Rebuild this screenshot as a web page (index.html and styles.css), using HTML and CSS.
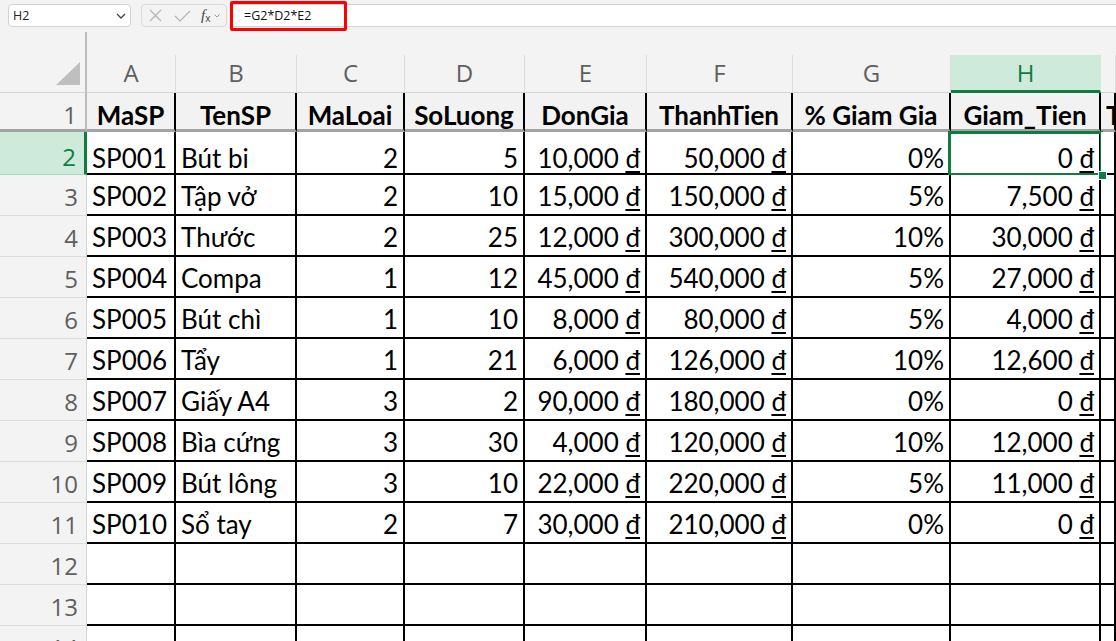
FILE: index.html
```html
<!DOCTYPE html>
<html lang="vi">
<head>
<meta charset="utf-8">
<title>Sheet</title>
<link rel="stylesheet" href="styles.css">
</head>
<body>
<div class="fbar">
  <div class="namebox">
    <span>H2</span>
    <svg class="chev" width="10" height="6" viewBox="0 0 10 6"><path d="M1 1 L5 5 L9 1" fill="none" stroke="#444" stroke-width="1.3"/></svg>
  </div>
  <div class="fnbox">
    <svg width="13" height="13" viewBox="0 0 13 13"><path d="M1 1 L12 12 M12 1 L1 12" stroke="#b3b3b3" stroke-width="1.2" fill="none"/></svg>
    <svg width="17" height="12" viewBox="0 0 17 12"><path d="M1 6 L6 11 L16 1" stroke="#b3b3b3" stroke-width="1.2" fill="none"/></svg>
    <span class="fx"><i>f</i><sub>x</sub></span>
    <svg width="6" height="4" viewBox="0 0 6 4"><path d="M0.5 0.5 L3 3 L5.5 0.5" stroke="#9a9a9a" stroke-width="1" fill="none"/></svg>
  </div>
  <div class="finput">
    <span>=G2*D2*E2</span>
    <div class="mark"></div>
  </div>
</div>

<div class="sheet">
  <div class="corner"><div class="tri"></div></div>
  <div class="ch">A</div><div class="ch">B</div><div class="ch">C</div><div class="ch">D</div><div class="ch">E</div><div class="ch">F</div><div class="ch">G</div><div class="ch sel">H</div><div class="ch"></div>

  <div class="rh r1">1</div>
  <div class="c hd">MaSP</div><div class="c hd">TenSP</div><div class="c hd">MaLoai</div><div class="c hd">SoLuong</div><div class="c hd">DonGia</div><div class="c hd">ThanhTien</div><div class="c hd">% Giam Gia</div><div class="c hd">Giam_Tien</div><div class="c hd left">TongTien</div>

  <div class="rh sel">2</div>
  <div class="c r2">SP001</div><div class="c r2">Bút bi</div><div class="c n r2">2</div><div class="c n r2">5</div><div class="c n r2">10,000&nbsp;<u>đ</u></div><div class="c n r2">50,000&nbsp;<u>đ</u></div><div class="c n r2">0%</div><div class="c n r2 active">0&nbsp;<u>đ</u><div class="selbox"></div><div class="handle"></div></div><div class="c r2"></div>

  <div class="rh">3</div>
  <div class="c">SP002</div><div class="c">Tập vở</div><div class="c n">2</div><div class="c n">10</div><div class="c n">15,000&nbsp;<u>đ</u></div><div class="c n">150,000&nbsp;<u>đ</u></div><div class="c n">5%</div><div class="c n">7,500&nbsp;<u>đ</u></div><div class="c"></div>

  <div class="rh">4</div>
  <div class="c">SP003</div><div class="c">Thước</div><div class="c n">2</div><div class="c n">25</div><div class="c n">12,000&nbsp;<u>đ</u></div><div class="c n">300,000&nbsp;<u>đ</u></div><div class="c n">10%</div><div class="c n">30,000&nbsp;<u>đ</u></div><div class="c"></div>

  <div class="rh">5</div>
  <div class="c">SP004</div><div class="c">Compa</div><div class="c n">1</div><div class="c n">12</div><div class="c n">45,000&nbsp;<u>đ</u></div><div class="c n">540,000&nbsp;<u>đ</u></div><div class="c n">5%</div><div class="c n">27,000&nbsp;<u>đ</u></div><div class="c"></div>

  <div class="rh">6</div>
  <div class="c">SP005</div><div class="c">Bút chì</div><div class="c n">1</div><div class="c n">10</div><div class="c n">8,000&nbsp;<u>đ</u></div><div class="c n">80,000&nbsp;<u>đ</u></div><div class="c n">5%</div><div class="c n">4,000&nbsp;<u>đ</u></div><div class="c"></div>

  <div class="rh">7</div>
  <div class="c">SP006</div><div class="c">Tẩy</div><div class="c n">1</div><div class="c n">21</div><div class="c n">6,000&nbsp;<u>đ</u></div><div class="c n">126,000&nbsp;<u>đ</u></div><div class="c n">10%</div><div class="c n">12,600&nbsp;<u>đ</u></div><div class="c"></div>

  <div class="rh">8</div>
  <div class="c">SP007</div><div class="c">Giấy A4</div><div class="c n">3</div><div class="c n">2</div><div class="c n">90,000&nbsp;<u>đ</u></div><div class="c n">180,000&nbsp;<u>đ</u></div><div class="c n">0%</div><div class="c n">0&nbsp;<u>đ</u></div><div class="c"></div>

  <div class="rh">9</div>
  <div class="c">SP008</div><div class="c">Bìa cứng</div><div class="c n">3</div><div class="c n">30</div><div class="c n">4,000&nbsp;<u>đ</u></div><div class="c n">120,000&nbsp;<u>đ</u></div><div class="c n">10%</div><div class="c n">12,000&nbsp;<u>đ</u></div><div class="c"></div>

  <div class="rh">10</div>
  <div class="c">SP009</div><div class="c">Bút lông</div><div class="c n">3</div><div class="c n">10</div><div class="c n">22,000&nbsp;<u>đ</u></div><div class="c n">220,000&nbsp;<u>đ</u></div><div class="c n">5%</div><div class="c n">11,000&nbsp;<u>đ</u></div><div class="c"></div>

  <div class="rh">11</div>
  <div class="c">SP010</div><div class="c">Sổ tay</div><div class="c n">2</div><div class="c n">7</div><div class="c n">30,000&nbsp;<u>đ</u></div><div class="c n">210,000&nbsp;<u>đ</u></div><div class="c n">0%</div><div class="c n">0&nbsp;<u>đ</u></div><div class="c"></div>

  <div class="rh">12</div>
  <div class="c"></div><div class="c"></div><div class="c"></div><div class="c"></div><div class="c"></div><div class="c"></div><div class="c"></div><div class="c"></div><div class="c"></div>

  <div class="rh">13</div>
  <div class="c"></div><div class="c"></div><div class="c"></div><div class="c"></div><div class="c"></div><div class="c"></div><div class="c"></div><div class="c"></div><div class="c"></div>

  <div class="rh">14</div>
  <div class="c"></div><div class="c"></div><div class="c"></div><div class="c"></div><div class="c"></div><div class="c"></div><div class="c"></div><div class="c"></div><div class="c"></div>
</div>
</body>
</html>
```

FILE: styles.css
```css
* { box-sizing: border-box; }
html, body {
  margin: 0;
  padding: 0;
  width: 1116px;
  height: 641px;
  overflow: hidden;
  background: #f3f3f3;
}

/* formula bar */
.fbar {
  height: 31px;
  display: flex;
  align-items: flex-start;
  padding-top: 4px;
  font-family: "Open Sans", "Noto Sans", sans-serif;
  font-size: 12.5px;
  color: #222;
}
.namebox {
  margin-left: 8px;
  width: 123px;
  height: 23px;
  background: #fff;
  border: 1px solid #d3d3d3;
  border-radius: 4px;
  display: flex;
  align-items: center;
  justify-content: space-between;
  padding: 0 3px 0 4px;
}
.namebox .chev { margin-right: 1px; }
.fnbox {
  margin-left: 10px;
  width: 86px;
  height: 23px;
  border: 1px solid #d9d9d9;
  border-radius: 4px;
  display: flex;
  align-items: center;
  padding-left: 7px;
}
.fnbox svg:nth-child(1) { margin-right: 12px; }
.fnbox svg:nth-child(2) { margin-right: 10px; }
.fx {
  font-family: "Liberation Serif", "DejaVu Serif", serif;
  font-size: 15px;
  color: #444;
  line-height: 1;
  margin-right: 4px;
}
.fx sub { font-size: 10px; font-style: normal; vertical-align: -2px; font-family: "Open Sans", sans-serif; }
.finput {
  position: relative;
  flex: 1;
  margin-left: 4px;
  height: 23px;
  background: #fff;
  border-top: 1px solid #d3d3d3;
  border-bottom: 1px solid #d3d3d3;
  display: flex;
  align-items: center;
  padding-left: 13px;
  color: #111;
}
.mark {
  position: absolute;
  left: -1px;
  top: -4px;
  width: 117px;
  height: 30px;
  border: 3px solid #ff0000;
  border-radius: 2px;
}

/* sheet grid */
.sheet {
  display: grid;
  grid-template-columns: 87px 89px 121px 108px 120px 122px 146px 158px 150px 1fr;
  grid-template-rows: 62px 39px 43px repeat(12, 41px);
}
.corner {
  border-right: 2px solid #bcbcbc;
  border-bottom: 1px solid #d4d4d4;
  margin-top: 1px;
  display: flex;
  justify-content: flex-end;
  align-items: flex-end;
  padding: 0 5px 7px 0;
}
.tri {
  width: 24px;
  height: 23px;
  background: #bfbfbf;
  clip-path: polygon(100% 0, 100% 100%, 0 100%);
}
.ch {
  align-self: end;
  height: 38px;
  border-right: 1px solid #dcdcdc;
  border-bottom: 1px solid #d4d4d4;
  font-family: "Open Sans", "Noto Sans", sans-serif;
  font-size: 24px;
  line-height: 36px;
  text-align: center;
  color: #5f5f5f;
}
.ch.sel {
  background: #cdeada;
  color: #107c41;
  border-bottom: 3px solid #107c41;
  border-right: 1px solid #cdeada;
}

.rh {
  background: #f3f3f3;
  border-right: 1px solid #d4d4d4;
  border-bottom: 1px solid #dcdcdc;
  display: flex;
  justify-content: flex-end;
  align-items: flex-end;
  padding: 0 8px 2px 0;
  font-family: "Open Sans", "Noto Sans", sans-serif;
  font-size: 24px;
  line-height: 33px;
  color: #5f5f5f;
}
.rh.r1 {
  border-bottom: 3px solid #a3a3a3;
  border-right: 2px solid #bcbcbc;
  padding-bottom: 0;
  line-height: 28px;
}
.rh.sel {
  background: #cdeada;
  color: #107c41;
  border-right: 3px solid #107c41;
  border-bottom: 1px solid #a9d8bd;
  padding-bottom: 1px;
}

.c {
  position: relative;
  background: #fff;
  border-right: 2px solid #000;
  border-bottom: 2px solid #000;
  display: flex;
  align-items: flex-end;
  padding: 0 5px 2px 5px;
  font-family: Lato, "Noto Sans", sans-serif;
  font-size: 26px;
  line-height: 31px;
  color: #000;
  white-space: nowrap;
  overflow: hidden;
}
.c.r2 { padding-bottom: 0; line-height: 29px; }
.c.n { justify-content: flex-end; }
.c.hd {
  background: #f2f2f2;
  font-weight: bold;
  justify-content: center;
  border-bottom: 3px solid #a3a3a3;
  padding-bottom: 0;
  line-height: 27px;
}
.c.hd.left { justify-content: flex-start; }
.c u { text-underline-offset: 3px; text-decoration-thickness: 1.5px; }
.c.active { overflow: visible; }
.selbox {
  position: absolute;
  left: -3px;
  top: -1px;
  width: 155px;
  height: 45px;
  border: 3px solid #107c41;
  pointer-events: none;
}
.handle {
  position: absolute;
  left: 147px;
  top: 39px;
  width: 9px;
  height: 9px;
  background: #107c41;
  border: 1px solid #fff;
  z-index: 2;
}
```
